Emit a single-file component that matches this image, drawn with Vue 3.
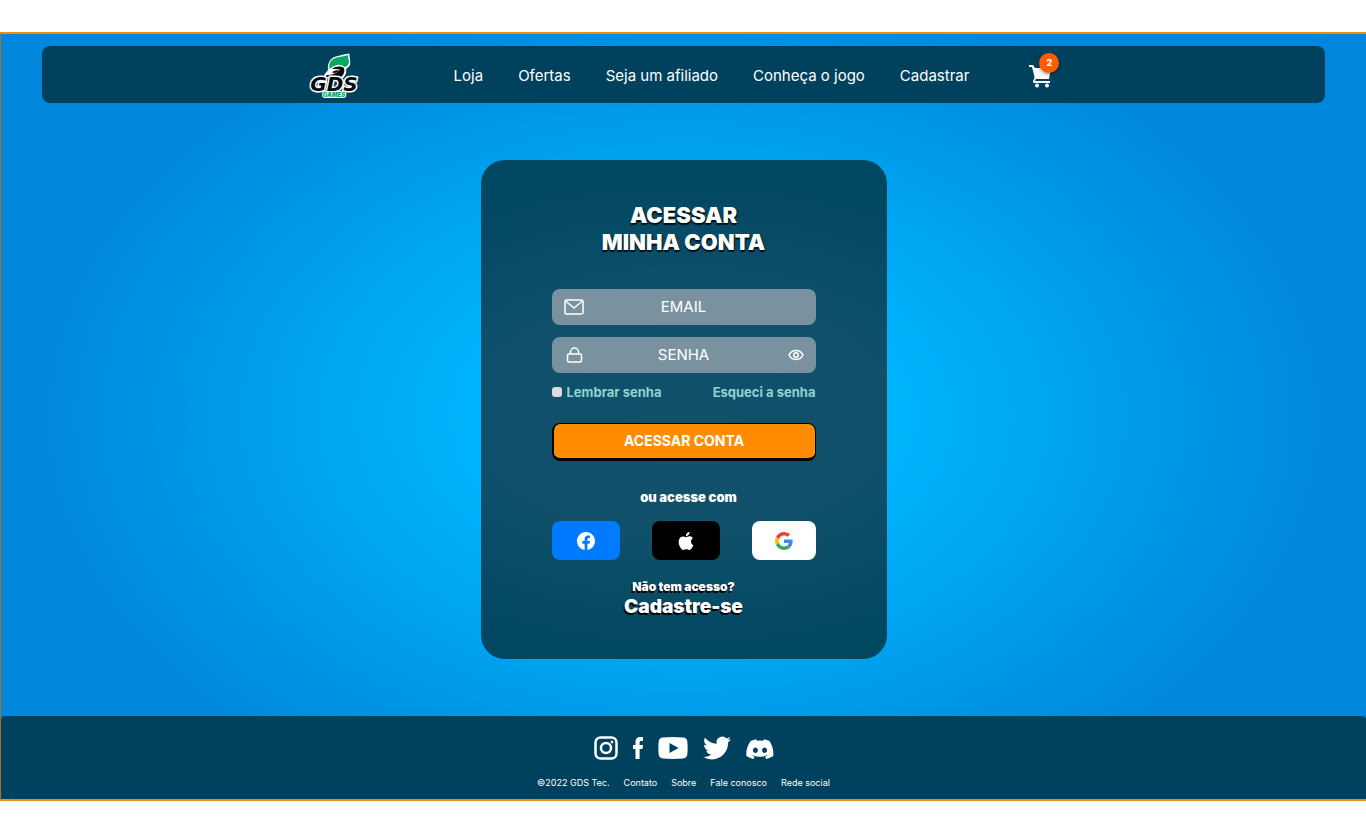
<script setup>
import { ref } from 'vue'

const email = ref('')
const password = ref('')
const visible = ref(false)
const remember = ref(false)
const footerLinks = ['Contato', 'Sobre', 'Fale conosco', 'Rede social']
</script>

<template>
  <div class="page">
    <header class="topbar">
      <a class="logo" href="#" aria-label="GDS Games">
        <svg width="54" height="46" viewBox="0 0 54 46">
          <path d="M16 22l4-5c-1-9 4-13 10-14 4-1 7-2 11.500-2.500C41 4 43 8 42 12c-1 2-3 3-4 4 1 4-1 7-3 9H17z" fill="#fff" />
          <path d="M21.500 16C20 8 25 5 31 4c3-.5 6-1 9-2-.5 3 2 6 .5 9-1 2-2 2-4 3-4-4-10-2-15 2z" fill="#08a765" />
          <path d="M24 16c4-3 9-3 12-1 1 4 0 6-3 9H18c-1-1 0-2 2-2l4-.5c4-1 6-3 8-5-3-1-5-.5-8-.5z" fill="#080b0d" />
          <path d="M24 19.500c2-2 4-2.500 7-2-2 2-4 3-7 2z" fill="#080b0d" />
          <text text-anchor="middle">
            <tspan class="logo-name" x="26" y="38">GDS</tspan>
            <tspan class="logo-sub" x="26" y="44">GAMES</tspan>
          </text>
        </svg>
      </a>
      <nav class="nav">
        <a href="#">Loja</a>
        <a href="#">Ofertas</a>
        <a href="#">Seja um afiliado</a>
        <a href="#">Conheça o jogo</a>
        <a href="#">Cadastrar</a>
      </nav>
      <a class="cart" href="#" aria-label="Carrinho">
        <svg width="24" height="24" viewBox="0 0 24 24" fill="#fff">
          <path d="M0 1h4l2 3h16l-2 11H6L3 3H0z" />
          <path d="M7 14l-1 3h15v2H5c-1 0-1-1-1-2l2-4z" />
          <circle cx="8" cy="21.500" r="2" /><circle cx="18" cy="21.500" r="2" />
        </svg>
        <span class="badge">2</span>
      </a>
    </header>

    <main class="main">
      <form class="card" @submit.prevent>
        <h1 class="title">ACESSAR<br />MINHA CONTA</h1>

        <label class="field">
          <svg width="20" height="16" viewBox="0 0 20 16" fill="none" stroke="#fff" stroke-width="1.5" stroke-linecap="round" stroke-linejoin="round">
            <rect x="1" y="1" width="18" height="14" rx="1.5" /><path d="M1.500 2L10 9l8.500-7" />
          </svg>
          <input v-model="email" type="email" placeholder="EMAIL" aria-label="Email" />
        </label>

        <div class="field">
          <svg width="20" height="16" viewBox="0 0 20 16" fill="none" stroke="#fff" stroke-width="1.5">
            <rect x="3.500" y="7" width="14" height="8" rx="1.5" /><path d="M6.500 7V5a4 4 0 0 1 8 0v2" />
          </svg>
          <input v-model="password" :type="visible ? 'text' : 'password'" placeholder="SENHA" aria-label="Senha" />
          <button class="eye" type="button" aria-label="Mostrar senha" @click="visible = !visible">
            <svg width="16" height="12" viewBox="0 0 16 12" fill="none" stroke="#fff" stroke-width="1.500">
              <path d="M1 6c3-6 11-6 14 0-3 6-11 6-14 0z" /><circle cx="8" cy="6" r="2.300" />
            </svg>
          </button>
        </div>

        <div class="options">
          <label class="remember"><input v-model="remember" type="checkbox" />Lembrar senha</label>
          <a href="#">Esqueci a senha</a>
        </div>

        <button class="submit" type="submit">ACESSAR CONTA</button>

        <p class="or">ou acesse com</p>
        <div class="social-login">
          <button class="facebook" type="button" aria-label="Facebook">
            <svg width="18" height="18" viewBox="0 0 24 24" fill="#fff">
              <path d="M24 12.070C24 5.400 18.630 0 12 0S0 5.400 0 12.070c0 6.030 4.390 11.020 10.130 11.930v-8.440H7.080v-3.490h3.050V9.410c0-3.020 1.790-4.690 4.530-4.690 1.310 0 2.690.24 2.690.24v2.970h-1.520c-1.490 0-1.960.93-1.960 1.890v2.250h3.330l-.53 3.490h-2.800V24C19.610 23.090 24 18.100 24 12.070z" />
            </svg>
          </button>
          <button class="apple" type="button" aria-label="Apple">
            <svg width="18" height="18" viewBox="0 0 24 24" fill="#fff">
              <path d="M12.150 6.900c-.95 0-2.410-1.080-3.960-1.040-2.040.03-3.910 1.180-4.960 3.010-2.120 3.670-.55 9.100 1.510 12.090 1.010 1.450 2.210 3.090 3.790 3.040 1.520-.07 2.090-.99 3.930-.99 1.830 0 2.350.99 3.960.95 1.640-.03 2.680-1.480 3.680-2.950 1.160-1.690 1.640-3.320 1.660-3.410-.04-.01-3.180-1.220-3.220-4.860-.03-3.040 2.480-4.490 2.600-4.560-1.430-2.090-3.620-2.320-4.390-2.380-2-.16-3.680 1.100-4.600 1.100zM15.530 3.830c.84-1.010 1.400-2.430 1.250-3.830-1.210.05-2.660.81-3.530 1.820-.78.9-1.450 2.340-1.270 3.710 1.340.1 2.710-.69 3.550-1.700z" />
            </svg>
          </button>
          <button class="google" type="button" aria-label="Google">
            <svg width="18" height="18" viewBox="0 0 48 48">
              <path fill="#EA4335" d="M24 9.500c3.540 0 6.710 1.220 9.210 3.600l6.850-6.850C35.900 2.380 30.470 0 24 0 14.620 0 6.510 5.380 2.560 13.220l7.980 6.190C12.430 13.720 17.740 9.500 24 9.500z" />
              <path fill="#4285F4" d="M46.980 24.550c0-1.570-.15-3.090-.38-4.550H24v9.020h12.940c-.58 2.960-2.260 5.480-4.780 7.180l7.730 6c4.510-4.180 7.090-10.360 7.090-17.650z" />
              <path fill="#FBBC05" d="M10.530 28.590A14.500 14.500 0 0 1 9.770 24c0-1.600.27-3.140.76-4.590l-7.980-6.190A24 24 0 0 0 0 24c0 3.880.92 7.540 2.560 10.780z" />
              <path fill="#34A853" d="M24 48c6.480 0 11.930-2.130 15.890-5.810l-7.730-6C30.010 37.640 27.240 38.490 24 38.490c-6.260 0-11.570-4.220-13.470-9.910l-7.980 6.190C6.510 42.620 14.620 48 24 48z" />
            </svg>
          </button>
        </div>

        <p class="signup">Não tem acesso?<a href="#">Cadastre-se</a></p>
      </form>
    </main>

    <footer class="footer">
      <div class="networks">
        <a href="#" aria-label="Instagram">
          <svg width="24" height="24" viewBox="0 0 24 24" fill="none" stroke="#fff" stroke-width="2.500">
            <rect x="1.500" y="1.500" width="21" height="21" rx="5" /><circle cx="12" cy="12" r="5" /><circle cx="18" cy="6" r="1" fill="#fff" stroke-width="1" />
          </svg>
        </a>
        <a href="#" aria-label="Facebook">
          <svg width="10" height="22" viewBox="0 0 10 22" fill="#fff">
            <path d="M2.500 22V12H0V8h2.500V5C2.500 1.500 4.500 0 7 0h3v4H8C7 4 6.600 4.500 6.600 5.500V8H10l-.5 4H6.600v10z" />
          </svg>
        </a>
        <a href="#" aria-label="YouTube">
          <svg width="30" height="22" viewBox="0 0 30 22" fill="#fff">
            <path fill-rule="evenodd" d="M5 .5Q15-.4 25 .5q4 .3 4.300 4 .7 6.500 0 13-.4 3.500-4.300 4-10 .9-20 0-4-.4-4.300-4-.7-6.500 0-13Q1 .8 5 .5zM11.500 6v10l9-5z" />
          </svg>
        </a>
        <a href="#" aria-label="Twitter">
          <svg width="28" height="28" viewBox="0 0 24 24" fill="#fff">
            <path d="M23.950 4.570a10 10 0 0 1-2.820.77 4.960 4.960 0 0 0 2.160-2.720c-.95.55-2 .96-3.130 1.180a4.920 4.920 0 0 0-8.380 4.480C7.690 8.100 4.070 6.130 1.640 3.160a4.920 4.920 0 0 0 1.520 6.570 4.900 4.900 0 0 1-2.230-.61v.06a4.920 4.920 0 0 0 3.950 4.830 5 5 0 0 1-2.210.08 4.940 4.940 0 0 0 4.600 3.420A9.870 9.870 0 0 1 0 19.540a14 14 0 0 0 7.550 2.210c9.050 0 14-7.500 14-13.980 0-.21 0-.42-.02-.63a9.940 9.940 0 0 0 2.420-2.570z" />
          </svg>
        </a>
        <a href="#" aria-label="Discord">
          <svg width="28" height="24" viewBox="0 1 24 21" fill="#fff">
            <path d="M20.320 5.370a19.800 19.800 0 0 0-4.890-1.520c-.2.340-.44.820-.6 1.240a18.300 18.300 0 0 0-5.490 0c-.16-.4-.4-.87-.62-1.250a19.700 19.700 0 0 0-4.890 1.520C.53 10.050-.32 14.080.1 18.560a20 20 0 0 0 5.990 2.530c.46-.63.87-1.300 1.230-1.990-.65-.25-1.280-.55-1.870-.9l.37-.29c3.930 1.790 8.180 1.790 12.060 0l.37.290c-.59.350-1.220.640-1.870.890.360.700.770 1.360 1.220 2a19.800 19.800 0 0 0 6-2.530c.5-5.180-.84-9.170-3.280-13.190zM8.020 15.830c-1.180 0-2.160-1.080-2.160-2.420s.96-2.420 2.160-2.420c1.210 0 2.180 1.090 2.160 2.420 0 1.340-.96 2.420-2.160 2.420zm7.970 0c-1.180 0-2.160-1.080-2.160-2.420s.96-2.420 2.160-2.420c1.210 0 2.180 1.090 2.160 2.420 0 1.340-.95 2.420-2.160 2.420z" />
          </svg>
        </a>
      </div>
      <div class="legal">
        <span>©2022 GDS Tec.</span>
        <a v-for="link in footerLinks" :key="link" href="#">{{ link }}</a>
      </div>
    </footer>
  </div>
</template>

<style>
body {
  background: #fff;
}
</style>

<style scoped>
* {
  box-sizing: border-box;
}

.page {
  display: flex;
  flex-direction: column;
  margin-top: 32px;
  border: solid #f58b08;
  border-width: 2px 0 2px 1px;
  border-left-color: #a6712b;
  background: radial-gradient(ellipse 660px 440px at 50% 50%, #00b7ff 0%, #00b5fd 32%, #0086db 100%);
  color: #fff;
  font-family: Inter, "Liberation Sans", sans-serif;
}

a {
  color: inherit;
  text-decoration: none;
}

.topbar {
  display: flex;
  align-items: center;
  justify-content: center;
  height: 57px;
  margin: 12px 41px 0;
  padding-top: 2px;
  border-radius: 8px;
  background: #00415d;
}

.logo svg {
  display: block;
  overflow: visible;
}

.logo-name {
  font: oblique 700 20px "DejaVu Sans", sans-serif;
  fill: #080b0d;
  stroke: #fff;
  stroke-width: 3px;
  paint-order: stroke;
}

.logo-sub {
  font: italic 900 6px Inter, sans-serif;
  fill: #08a765;
  stroke: #fff;
  stroke-width: 2px;
  paint-order: stroke;
}

.nav {
  display: flex;
  gap: 35px;
  margin: 0 60px 0 92px;
  font-size: 15px;
  line-height: 20px;
}

.cart {
  position: relative;
  width: 30px;
  height: 24px;
}

.cart svg {
  display: block;
}

.badge {
  position: absolute;
  top: -11px;
  right: 0;
  width: 20px;
  height: 20px;
  border-radius: 50%;
  background: #ff5c00;
  box-shadow: 0 2px 3px #0005;
  font-size: 9px;
  font-weight: 800;
  line-height: 20px;
  text-align: center;
}

.main {
  display: flex;
  justify-content: center;
  padding: 57px 0;
}

.card {
  display: flex;
  flex-direction: column;
  width: 406px;
  padding: 42px 71px 41px;
  border-radius: 24px;
  background: radial-gradient(ellipse 420px 240px at 50% 51%, #13516b 0%, #10506a 50%, #004761 100%);
}

.title {
  margin: 0 0 33px;
  font-size: 22px;
  font-weight: 900;
  line-height: 27px;
  text-align: center;
  text-shadow: 0 2px 1px #001018, 1px 1px 1px #001018;
}

.field {
  position: relative;
  display: flex;
  align-items: center;
  height: 36px;
  margin-bottom: 12px;
  padding: 0 12px;
  border-radius: 8px;
  background: #7a929f;
}

.field input {
  flex: 1;
  min-width: 0;
  padding: 0 20px 0 0;
  border: 0;
  outline: 0;
  background: none;
  color: #fff;
  font: 15px/20px Inter, sans-serif;
  text-align: center;
}

.field input::placeholder {
  color: #fff;
  opacity: 1;
}

.eye {
  position: absolute;
  right: 12px;
  padding: 0;
  border: 0;
  background: none;
}

.eye svg {
  display: block;
}

.options {
  display: flex;
  justify-content: space-between;
  margin-bottom: 24px;
  color: #8dd4d2;
  font-size: 13px;
  font-weight: 700;
  line-height: 14px;
}

.remember {
  display: flex;
  align-items: center;
  gap: 5px;
}

.remember input {
  appearance: none;
  width: 10px;
  height: 10px;
  margin: 0;
  border-radius: 3px;
  background: #ddd;
}

.remember input:checked {
  background: #ff8c00;
}

.submit {
  height: 38px;
  padding: 0;
  border: solid #000;
  border-width: 1px 1px 3px 2px;
  border-radius: 8px;
  background: #ff8c00;
  color: #fff;
  font: 700 14px/20px Inter, sans-serif;
}

.or {
  margin: 27px 0 15px;
  padding-left: 10px;
  font-size: 13px;
  font-weight: 900;
  line-height: 18px;
  text-align: center;
}

.social-login {
  display: flex;
  align-items: center;
  justify-content: space-between;
}

.social-login button {
  display: flex;
  align-items: center;
  justify-content: center;
  width: 68px;
  height: 39px;
  padding: 0;
  border: 0;
  border-radius: 8px;
}

.social-login .facebook {
  background: #007aff;
}

.social-login .apple {
  background: #000;
}

.social-login .google {
  width: 64px;
  background: #fff;
}

.signup {
  margin: 18px 0 0;
  font-size: 12px;
  font-weight: 900;
  line-height: 18px;
  text-align: center;
  text-shadow: -1px 2px 0 #000;
}

.signup a {
  display: block;
  font-size: 19px;
  line-height: 22px;
}

.footer {
  display: flex;
  flex-direction: column;
  align-items: center;
  gap: 14px;
  padding: 18px 0 9px;
  border-radius: 4px 4px 0 0;
  background: #00415d;
}

.networks {
  display: flex;
  align-items: center;
  gap: 15px;
  height: 28px;
}

.networks svg {
  display: block;
}

.legal {
  display: flex;
  gap: 14px;
  font-size: 9px;
  line-height: 14px;
}
</style>
